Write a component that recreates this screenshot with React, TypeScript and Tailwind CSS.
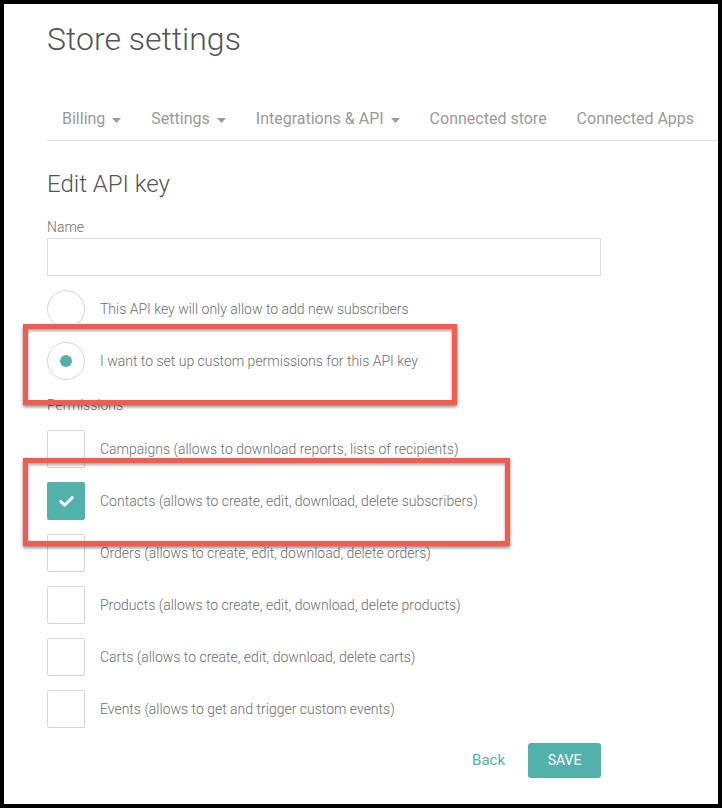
import { FaCheck } from "react-icons/fa";

const tabs = [
  { label: "Billing", caret: true },
  { label: "Settings", caret: true },
  { label: "Integrations & API", caret: true },
  { label: "Connected store", caret: false },
  { label: "Connected Apps", caret: false },
];

const permissions = [
  { label: "Campaigns (allows to download reports, lists of recipients)", checked: false },
  { label: "Contacts (allows to create, edit, download, delete subscribers)", checked: true },
  { label: "Orders (allows to create, edit, download, delete orders)", checked: false },
  { label: "Products (allows to create, edit, download, delete products)", checked: false },
  { label: "Carts (allows to create, edit, download, delete carts)", checked: false },
  { label: "Events (allows to get and trigger custom events)", checked: false },
];

function Caret() {
  return (
    <svg width="9" height="5" viewBox="0 0 9 5" className="ml-[7px] mt-[2px]">
      <path d="M0 0h9L4.5 5z" fill="#9a9a9a" />
    </svg>
  );
}

function Radio({ checked, label }: { checked: boolean; label: string }) {
  return (
    <div className="flex h-[38px] items-center">
      <span className="flex h-[38px] w-[38px] shrink-0 items-center justify-center rounded-full border border-[#d6d6d6] bg-white">
        {checked && <span className="h-[12px] w-[12px] rounded-full bg-[#52b1ab]" />}
      </span>
      <span className="ml-[15px] text-[14px] font-light text-[#6e6e6e]">{label}</span>
    </div>
  );
}

function Checkbox({ checked, label }: { checked: boolean; label: string }) {
  return (
    <div className="flex h-[38px] items-center">
      {checked ? (
        <span className="flex h-[38px] w-[38px] shrink-0 items-center justify-center rounded-[2px] bg-[#52b1ab]">
          <FaCheck className="text-white" size={15} />
        </span>
      ) : (
        <span className="h-[38px] w-[38px] shrink-0 rounded-[2px] border border-[#d6d6d6] bg-white" />
      )}
      <span className="ml-[15px] text-[14px] font-light text-[#6e6e6e]">{label}</span>
    </div>
  );
}

export default function App() {
  return (
    <div
      className="relative h-[808px] w-[722px] overflow-hidden border-4 border-black bg-white"
      style={{ fontFamily: "Roboto, 'Liberation Sans', sans-serif" }}
    >
      <div className="pl-[43px] pt-[16px]">
        <h1 className="text-[32px] font-light leading-[38px] text-[#555]">Store settings</h1>

        <ul className="mt-[40px] flex border-b border-[#dedede]">
          {tabs.map((tab) => (
            <li
              key={tab.label}
              className="flex items-center pl-[15px] pr-[15px] py-[10px] text-[16px] leading-[22px] text-[#9a9a9a]"
            >
              {tab.label}
              {tab.caret && <Caret />}
            </li>
          ))}
        </ul>

        <div className="w-[554px]">
          <h2 className="mt-[28px] text-[24px] font-light leading-[30px] text-[#555]">Edit API key</h2>

          <label className="mt-[19px] block text-[14px] font-light leading-[18px] text-[#6e6e6e]">Name</label>
          <input className="mt-[2px] block h-[38px] w-full border border-[#dcdcdc] bg-white px-3 outline-none" />

          <div className="mt-[14px] flex flex-col gap-[14px]">
            <Radio checked={false} label="This API key will only allow to add new subscribers" />
            <Radio checked label="I want to set up custom permissions for this API key" />
          </div>

          <p className="mt-[16px] text-[14px] font-light leading-[18px] text-[#6e6e6e]">Permissions</p>

          <div className="mt-[16px] flex flex-col gap-[14px]">
            {permissions.map((p) => (
              <Checkbox key={p.label} checked={p.checked} label={p.label} />
            ))}
          </div>

          <div className="mt-[15px] flex items-center justify-end">
            <button className="mr-[23px] text-[15px] text-[#52b1ab]">Back</button>
            <button className="h-[35px] w-[73px] rounded-[3px] bg-[#52b1ab] text-[14px] text-white">SAVE</button>
          </div>
        </div>
      </div>

      {/* annotation boxes */}
      <div className="absolute left-[19px] top-[320px] h-[81px] w-[434px] border-[5px] border-[#f65a4c] shadow-[0_2px_3px_rgba(0,0,0,0.45),inset_0_2px_3px_rgba(0,0,0,0.35)]" />
      <div className="absolute left-[19px] top-[454px] h-[88px] w-[487px] border-[5px] border-[#f65a4c] shadow-[0_2px_3px_rgba(0,0,0,0.45),inset_0_2px_3px_rgba(0,0,0,0.35)]" />
    </div>
  );
}
